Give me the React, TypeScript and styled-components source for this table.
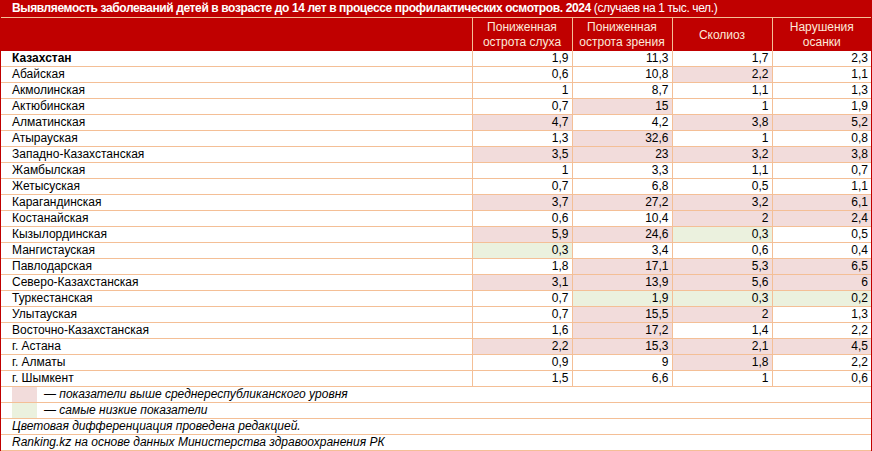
import React from "react";
import styled, { createGlobalStyle } from "styled-components";

type Mark = "" | "p" | "g";
type Row = { name: string; values: [string, Mark][]; bold?: boolean };

const rows: Row[] = [
  { name: "Казахстан", bold: true, values: [["1,9", ""], ["11,3", ""], ["1,7", ""], ["2,3", ""]] },
  { name: "Абайская", values: [["0,6", ""], ["10,8", ""], ["2,2", "p"], ["1,1", ""]] },
  { name: "Акмолинская", values: [["1", ""], ["8,7", ""], ["1,1", ""], ["1,3", ""]] },
  { name: "Актюбинская", values: [["0,7", ""], ["15", "p"], ["1", ""], ["1,9", ""]] },
  { name: "Алматинская", values: [["4,7", "p"], ["4,2", ""], ["3,8", "p"], ["5,2", "p"]] },
  { name: "Атырауская", values: [["1,3", ""], ["32,6", "p"], ["1", ""], ["0,8", ""]] },
  { name: "Западно-Казахстанская", values: [["3,5", "p"], ["23", "p"], ["3,2", "p"], ["3,8", "p"]] },
  { name: "Жамбылская", values: [["1", ""], ["3,3", ""], ["1,1", ""], ["0,7", ""]] },
  { name: "Жетысуская", values: [["0,7", ""], ["6,8", ""], ["0,5", ""], ["1,1", ""]] },
  { name: "Карагандинская", values: [["3,7", "p"], ["27,2", "p"], ["3,2", "p"], ["6,1", "p"]] },
  { name: "Костанайская", values: [["0,6", ""], ["10,4", ""], ["2", "p"], ["2,4", "p"]] },
  { name: "Кызылординская", values: [["5,9", "p"], ["24,6", "p"], ["0,3", "g"], ["0,5", ""]] },
  { name: "Мангистауская", values: [["0,3", "g"], ["3,4", ""], ["0,6", ""], ["0,4", ""]] },
  { name: "Павлодарская", values: [["1,8", ""], ["17,1", "p"], ["5,3", "p"], ["6,5", "p"]] },
  { name: "Северо-Казахстанская", values: [["3,1", "p"], ["13,9", "p"], ["5,6", "p"], ["6", "p"]] },
  { name: "Туркестанская", values: [["0,7", ""], ["1,9", "g"], ["0,3", "g"], ["0,2", "g"]] },
  { name: "Улытауская", values: [["0,7", ""], ["15,5", "p"], ["2", "p"], ["1,3", ""]] },
  { name: "Восточно-Казахстанская", values: [["1,6", ""], ["17,2", "p"], ["1,4", ""], ["2,2", ""]] },
  { name: "г. Астана", values: [["2,2", "p"], ["15,3", "p"], ["2,1", "p"], ["4,5", "p"]] },
  { name: "г. Алматы", values: [["0,9", ""], ["9", ""], ["1,8", "p"], ["2,2", ""]] },
  { name: "г. Шымкент", values: [["1,5", ""], ["6,6", ""], ["1", ""], ["0,6", ""]] },
];

const headers = [
  ["Пониженная", "острота слуха"],
  ["Пониженная", "острота зрения"],
  ["Сколиоз"],
  ["Нарушения", "осанки"],
];

const RED = "#c00000";
const LINE = "#f4bf96";
const fills: Record<Mark, string> = { "": "#ffffff", p: "#f2dcdb", g: "#ebf1de" };

const GlobalStyle = createGlobalStyle`
  body {
    margin: 0;
    background: #ffffff;
    font-family: "Liberation Sans", Arial, sans-serif;
  }
`;

const Frame = styled.div`
  width: 870px;
  border: 1px solid ${RED};
  border-top: none;
  border-bottom-color: #a00000;
`;

const Table = styled.table`
  width: 870px;
  border-collapse: collapse;
  table-layout: fixed;
  font-size: 12px;
  color: #000000;
`;

const TitleCell = styled.td`
  background: ${RED};
  color: #ffffff;
  height: 17px;
  padding: 0 0 0 11px;
  border-bottom: 1px solid ${LINE};
  white-space: nowrap;
  line-height: 17px;
  letter-spacing: -0.38px;
`;

const HeadCell = styled.th`
  background: ${RED};
  color: #fde9d9;
  font-weight: normal;
  height: 32px;
  padding: 1px 0 0;
  line-height: 15px;
  text-align: center;
  border-left: 1px solid ${LINE};
`;

const EmptyHead = styled.th`
  background: ${RED};
  padding: 0;
`;

const NameCell = styled.td<{ $bold?: boolean }>`
  height: 15px;
  padding: 0 0 0 11px;
  line-height: 15px;
  font-weight: ${(p) => (p.$bold ? "bold" : "normal")};
  border-bottom: 1px solid ${LINE};
  white-space: nowrap;
`;

const ValueCell = styled.td<{ $mark: Mark }>`
  height: 15px;
  padding: 0 3px 0 0;
  line-height: 15px;
  text-align: right;
  background: ${(p) => fills[p.$mark]};
  border-left: 1px solid ${LINE};
  border-bottom: 1px solid ${LINE};
`;

const NoteCell = styled.td<{ $top?: boolean }>`
  height: 15px;
  padding: 0 0 0 11px;
  line-height: 15px;
  font-style: italic;
  border-bottom: 1px solid ${LINE};
  border-top: ${(p) => (p.$top ? `1px solid ${RED}` : "none")};
  white-space: nowrap;
`;

const LegendLine = styled.div`
  display: flex;
  align-items: center;
  height: 15px;
  gap: 7px;
`;

const Swatch = styled.span<{ $mark: Mark }>`
  width: 25px;
  height: 15px;
  background: ${(p) => fills[p.$mark]};
`;

export default function App() {
  return (
    <>
      <GlobalStyle />
      <Frame>
        <Table>
          <colgroup>
            <col style={{ width: 471 }} />
            <col style={{ width: 100 }} />
            <col style={{ width: 100 }} />
            <col style={{ width: 100 }} />
            <col style={{ width: 99 }} />
          </colgroup>
          <tbody>
            <tr>
              <TitleCell colSpan={5}>
                <b>Выявляемость заболеваний детей в возрасте до 14 лет в процессе профилактических осмотров. 2024</b>{" "}
                (случаев на 1 тыс. чел.)
              </TitleCell>
            </tr>
            <tr>
              <EmptyHead />
              {headers.map((h, i) => (
                <HeadCell key={i}>
                  {h.map((line, j) => (
                    <div key={j}>{line}</div>
                  ))}
                </HeadCell>
              ))}
            </tr>
            {rows.map((r) => (
              <tr key={r.name}>
                <NameCell $bold={r.bold}>{r.name}</NameCell>
                {r.values.map(([v, m], i) => (
                  <ValueCell key={i} $mark={m}>
                    {v}
                  </ValueCell>
                ))}
              </tr>
            ))}
            <tr>
              <NoteCell colSpan={5}>
                <LegendLine>
                  <Swatch $mark="p" />
                  <span>— показатели выше среднереспубликанского уровня</span>
                </LegendLine>
              </NoteCell>
            </tr>
            <tr>
              <NoteCell colSpan={5}>
                <LegendLine>
                  <Swatch $mark="g" />
                  <span>— самые низкие показатели</span>
                </LegendLine>
              </NoteCell>
            </tr>
            <tr>
              <NoteCell colSpan={5}>Цветовая дифференциация проведена редакцией.</NoteCell>
            </tr>
            <tr>
              <NoteCell colSpan={5} $top>
                Ranking.kz на основе данных Министерства здравоохранения РК
              </NoteCell>
            </tr>
          </tbody>
        </Table>
      </Frame>
    </>
  );
}
